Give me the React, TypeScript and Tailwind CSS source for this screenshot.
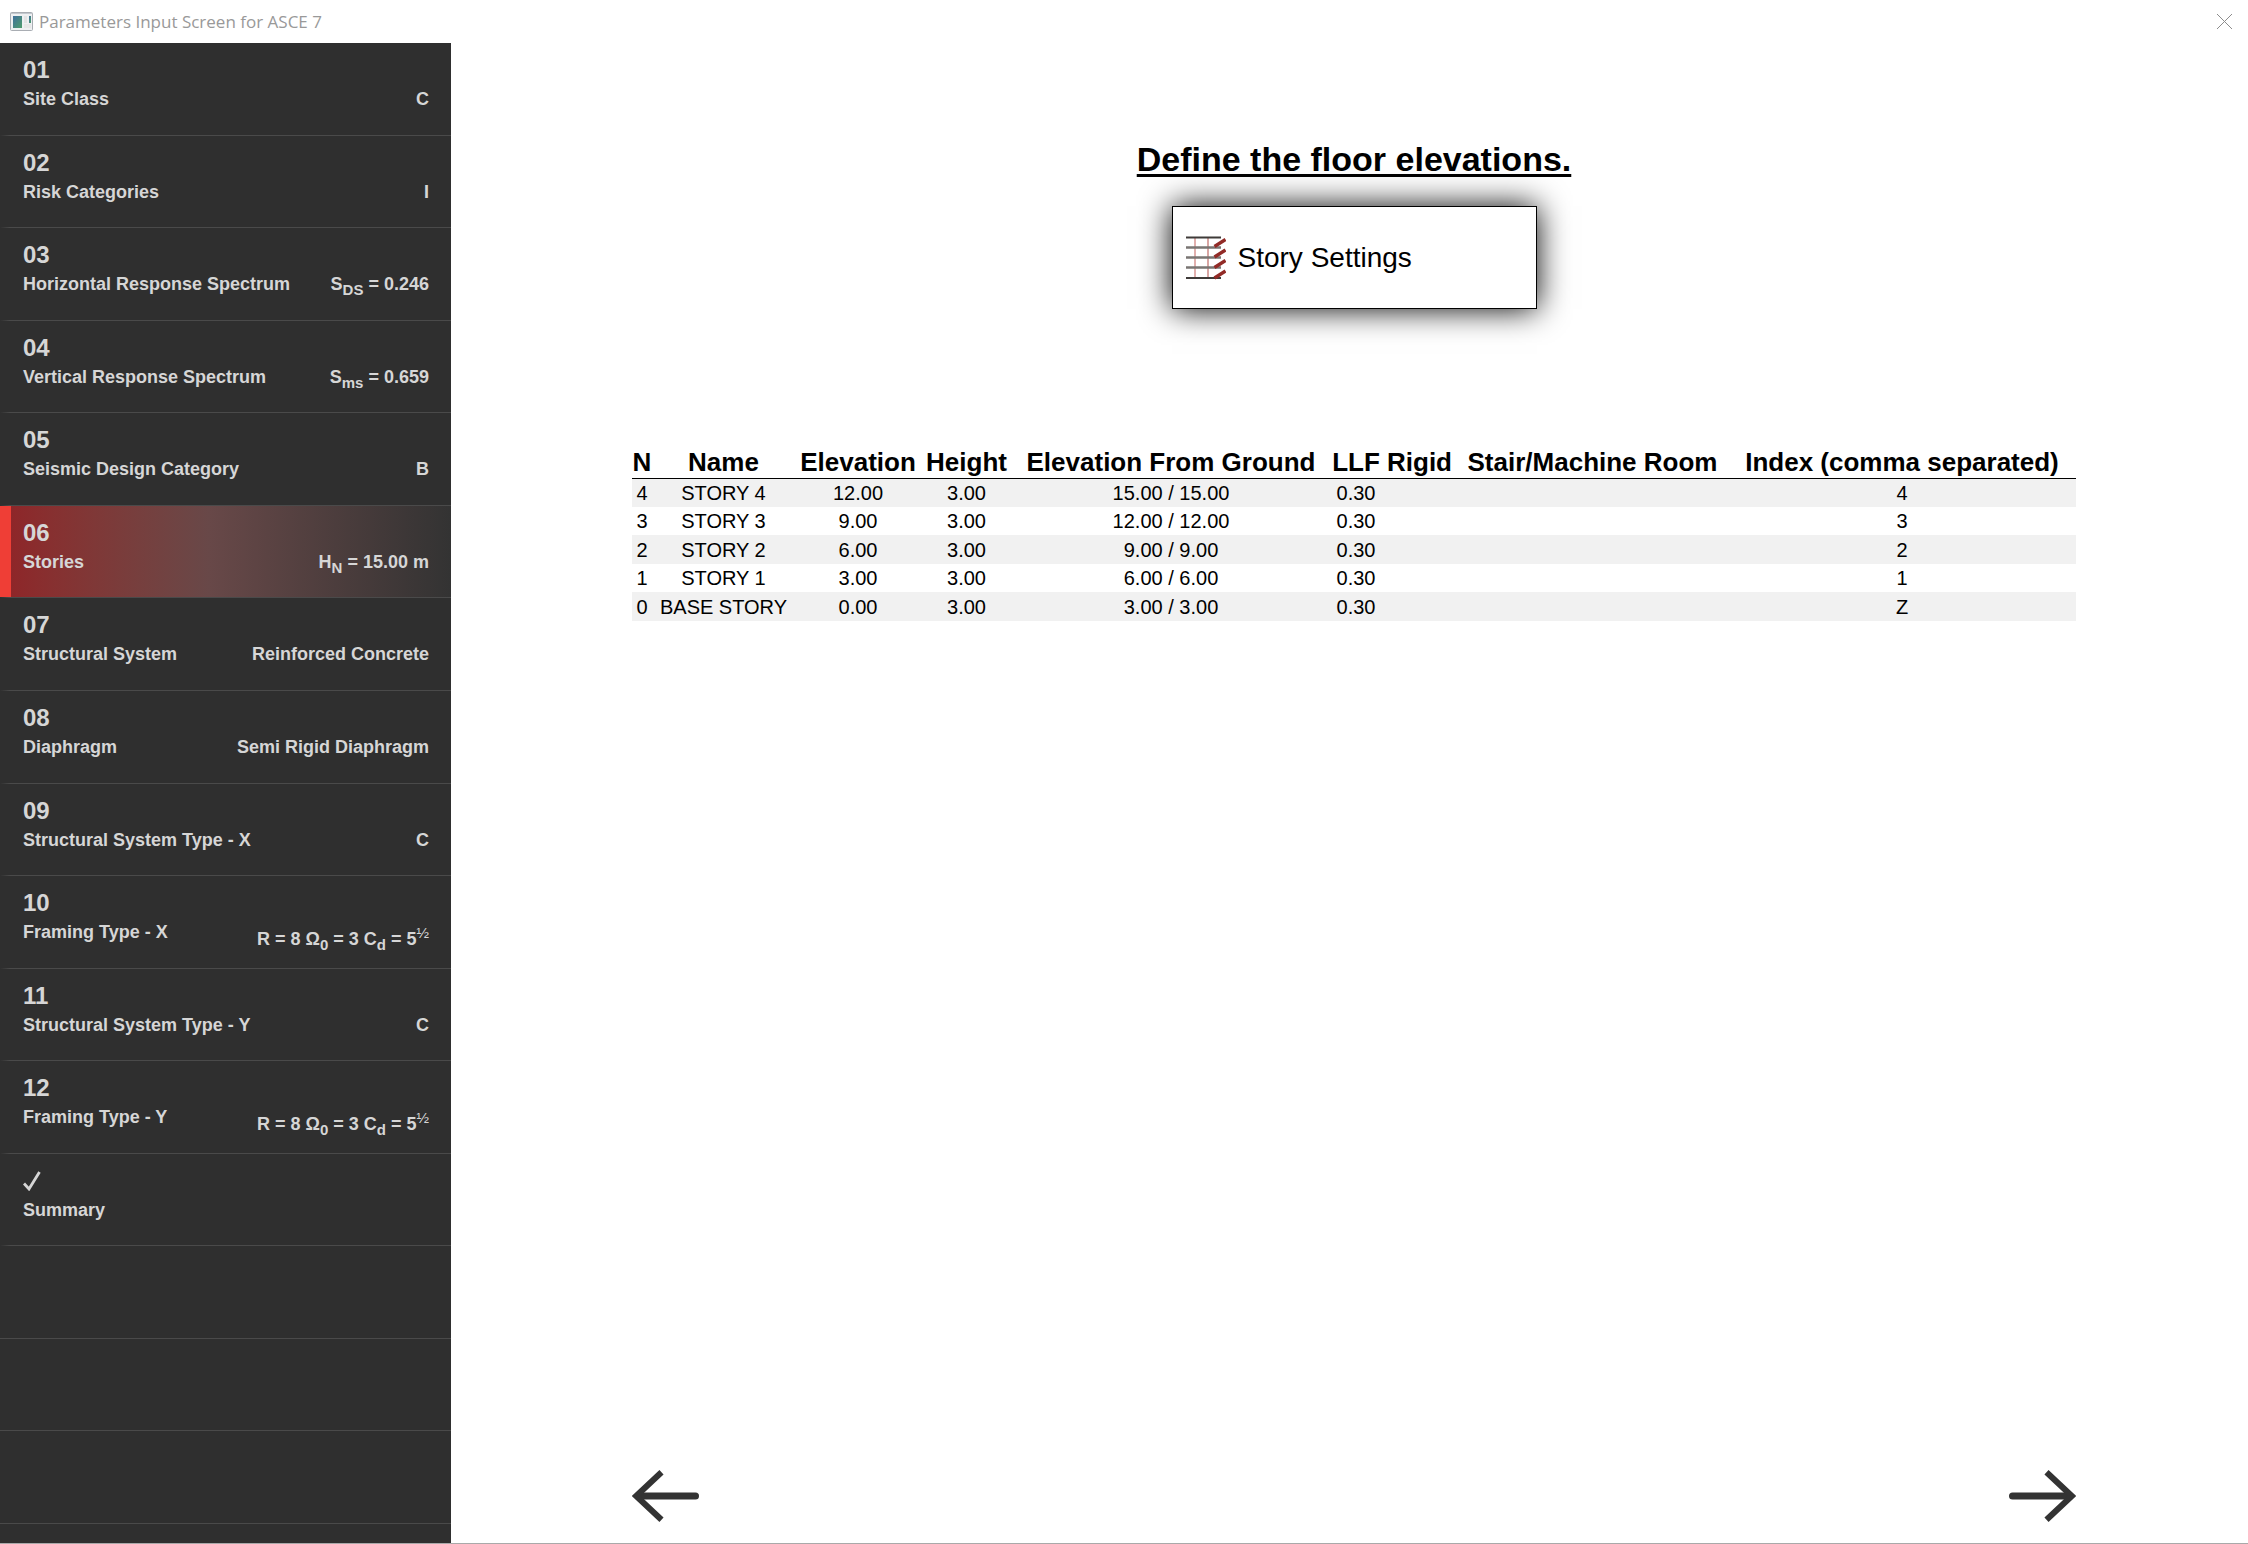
import { useState, type ReactNode } from 'react';

interface Step { id: string; label: string; value?: ReactNode; }

const Sub = ({ children }: { children: ReactNode }) => (
  <span className="relative top-[5px] text-[15px] leading-none">{children}</span>
);

const Framing = () => (
  <>
    R = 8 Ω<Sub>0</Sub> = 3 C<Sub>d</Sub> = 5<span className="align-super text-[15px] font-normal">½</span>
  </>
);

const STEPS: Step[] = [
  { id: '01', label: 'Site Class',                   value: 'C' },
  { id: '02', label: 'Risk Categories',              value: 'I' },
  { id: '03', label: 'Horizontal Response Spectrum', value: <>S<Sub>DS</Sub> = 0.246</> },
  { id: '04', label: 'Vertical Response Spectrum',   value: <>S<Sub>ms</Sub> = 0.659</> },
  { id: '05', label: 'Seismic Design Category',      value: 'B' },
  { id: '06', label: 'Stories',                      value: <>H<Sub>N</Sub> = 15.00 m</> },
  { id: '07', label: 'Structural System',            value: 'Reinforced Concrete' },
  { id: '08', label: 'Diaphragm',                    value: 'Semi Rigid Diaphragm' },
  { id: '09', label: 'Structural System Type - X',   value: 'C' },
  { id: '10', label: 'Framing Type - X',             value: <Framing /> },
  { id: '11', label: 'Structural System Type - Y',   value: 'C' },
  { id: '12', label: 'Framing Type - Y',             value: <Framing /> },
  { id: 'summary', label: 'Summary' },
];

// Unused slots keep their divider below the last step
const EMPTY_SLOTS = 3;

const COLUMNS = [
  { label: 'N',                       width: 'w-[20px]'  },
  { label: 'Name',                    width: 'w-[143px]' },
  { label: 'Elevation',               width: 'w-[126px]' },
  { label: 'Height',                  width: 'w-[91px]'  },
  { label: 'Elevation From Ground',   width: 'w-[318px]' },
  { label: 'LLF',                     width: 'w-[52px]'  },
  { label: 'Rigid',                   width: 'w-[75px]'  },
  { label: 'Stair/Machine Room',      width: 'w-[271px]' },
  { label: 'Index (comma separated)', width: 'w-[348px]' },
];

const STORIES = [
  ['4', 'STORY 4',    '12.00', '3.00', '15.00 / 15.00', '0.30', '', '', '4'],
  ['3', 'STORY 3',    '9.00',  '3.00', '12.00 / 12.00', '0.30', '', '', '3'],
  ['2', 'STORY 2',    '6.00',  '3.00', '9.00 / 9.00',   '0.30', '', '', '2'],
  ['1', 'STORY 1',    '3.00',  '3.00', '6.00 / 6.00',   '0.30', '', '', '1'],
  ['0', 'BASE STORY', '0.00',  '3.00', '3.00 / 3.00',   '0.30', '', '', 'Z'],
];

function WindowIcon() {
  return (
    <svg width="23" height="19" viewBox="0 0 23 19" aria-hidden="true">
      <defs>
        <linearGradient id="pane" x1="0" y1="0" x2="1" y2="1">
          <stop offset="0" stopColor="#3f6f9c" />
          <stop offset="1" stopColor="#4f9d6c" />
        </linearGradient>
      </defs>
      <rect x="0.5" y="0.5" width="22" height="18" rx="1" fill="#eef0f2" stroke="#a9adb3" />
      <path d="M1 1.5h21" stroke="#c3c8ce" />
      <rect x="3" y="4" width="9" height="12" fill="url(#pane)" />
      <rect x="14" y="4" width="3" height="7" fill="#e2e3e4" />
      <rect x="14" y="12" width="7" height="4" fill="#e6e7e7" />
      <rect x="19" y="4" width="2" height="7" fill="url(#pane)" />
    </svg>
  );
}

function StoriesIcon() {
  return (
    <svg width="40" height="44" viewBox="0 0 40 44" fill="none" aria-hidden="true">
      <path d="M9 1v42" stroke="#e2b0ae" strokeWidth="2" />
      <path d="M22 1v42" stroke="#c9807d" strokeWidth="1.4" />
      <path d="M0 1.5h35M0 42h35" stroke="#3f3b39" strokeWidth="1.8" />
      <path d="M0 11.5h35M0 21.5h35M0 31.5h35" stroke="#7a7573" strokeWidth="2.4" />
      <path d="M28.500 10.500l11-7M28.500 21l11-7M28.500 31.500l11-7M28.500 42l11-7" stroke="#922b27" strokeWidth="3.400" />
    </svg>
  );
}

function Arrow({ flip = false }: { flip?: boolean }) {
  return (
    <svg width="67" height="52" viewBox="0 0 67 52" fill="none" stroke="#333" className={flip ? 'rotate-180' : ''} aria-hidden="true">
      <path d="M6 26h57.500" strokeWidth="7" strokeLinecap="round" />
      <path d="M29.500 2.200L4.200 26l25.300 23.800" strokeWidth="6" />
    </svg>
  );
}

function StepItem({ step, active, onSelect }: { step: Step; active: boolean; onSelect: () => void }) {
  return (
    <li className="flex flex-1 flex-col">
      <button
        onClick={onSelect}
        className={`flex w-full flex-1 flex-col border-l-[11px] pt-[13px] pr-[22px] pl-[12px] text-left ${
          active
            ? 'border-[#ef3e36] bg-linear-to-r from-[#8e2629] via-[#684848] via-45% to-[#333333]'
            : 'border-transparent'
        }`}
      >
        <span className="flex h-7 items-center text-2xl leading-7">
          {step.id === 'summary' ? (
            <svg width="18" height="20" viewBox="0 0 18 20" fill="none" stroke="#d6d6d6" aria-hidden="true">
              <path d="M1 12.500l5 5.500L16.500 1" strokeWidth="2.800" />
            </svg>
          ) : step.id}
        </span>
        <span className="mt-[5px] flex w-full items-start justify-between text-lg leading-[21px]">
          <span>{step.label}</span>
          <span>{step.value}</span>
        </span>
      </button>
      <div className="h-px bg-linear-to-r from-transparent to-[#4a4a4a] to-[10px]" />
    </li>
  );
}

export default function App() {
  const [current, setCurrent] = useState(5);

  const move = (by: number) => setCurrent(c => Math.min(STEPS.length - 1, Math.max(0, c + by)));

  return (
    <div className="flex min-h-screen flex-col border-b border-[#a9a9a9] bg-white font-['Liberation_Sans',Arial,sans-serif] text-black">

      {/* Title bar */}
      <header className="flex h-[43px] items-center justify-between pr-4 pl-[10px]">
        <div className="flex items-center gap-[6px]">
          <WindowIcon />
          <span className="font-['Open_Sans',sans-serif] text-[17px] text-[#999999]">Parameters Input Screen for ASCE 7</span>
        </div>
        <button aria-label="Close">
          <svg width="15" height="15" viewBox="0 0 15 15" stroke="#8c8c8c" aria-hidden="true">
            <path d="M0 0l15 15M15 0L0 15" />
          </svg>
        </button>
      </header>

      <div className="flex flex-1">

        {/* Steps */}
        <nav className="flex w-[451px] shrink-0 flex-col bg-[#2f2f2f] font-bold text-[#d6d6d6]">
          <ol className="flex flex-1 flex-col">
            {STEPS.map((step, i) => (
              <StepItem key={step.id} step={step} active={i === current} onSelect={() => setCurrent(i)} />
            ))}
            {Array.from({ length: EMPTY_SLOTS }, (_, i) => (
              <li key={i} className="flex flex-1 flex-col justify-end">
                <div className="h-px bg-[#4a4a4a]" />
              </li>
            ))}
          </ol>
          <div className="h-[19px]" />
        </nav>

        {/* Content */}
        <main className="flex flex-1 flex-col pt-[96px] pr-[172px] pb-[21px] pl-[181px]">
          <div className="flex flex-col items-center">
            <h1 className="text-[34px] leading-10 font-bold underline decoration-[3px] underline-offset-[3px]">
              Define the floor elevations.
            </h1>
            <button className="mt-[27px] flex h-[103px] w-[365px] items-center gap-3 border border-black bg-white pl-[13px] text-[28px] shadow-[0_0_30px_#000000]">
              <StoriesIcon />
              Story Settings
            </button>
          </div>

          <table className="mt-[139px] w-full table-fixed border-collapse text-center text-xl">
            <thead>
              <tr className="h-[30px] border-b border-black text-[26px] leading-[29px]">
                {COLUMNS.map(c => (
                  <th key={c.label} className={`${c.width} p-0 text-center font-bold whitespace-nowrap`}>{c.label}</th>
                ))}
              </tr>
            </thead>
            <tbody>
              {STORIES.map(row => (
                <tr key={row[0]} className="odd:h-[29px] odd:bg-[#f1f1f1] even:h-[28px]">
                  {row.map((cell, i) => (
                    <td key={i} className="p-0 leading-7 whitespace-nowrap">{cell}</td>
                  ))}
                </tr>
              ))}
            </tbody>
          </table>

          <div className="mt-auto flex justify-between">
            <button aria-label="Previous" onClick={() => move(-1)}><Arrow /></button>
            <button aria-label="Next" onClick={() => move(1)}><Arrow flip /></button>
          </div>
        </main>
      </div>
    </div>
  );
}
